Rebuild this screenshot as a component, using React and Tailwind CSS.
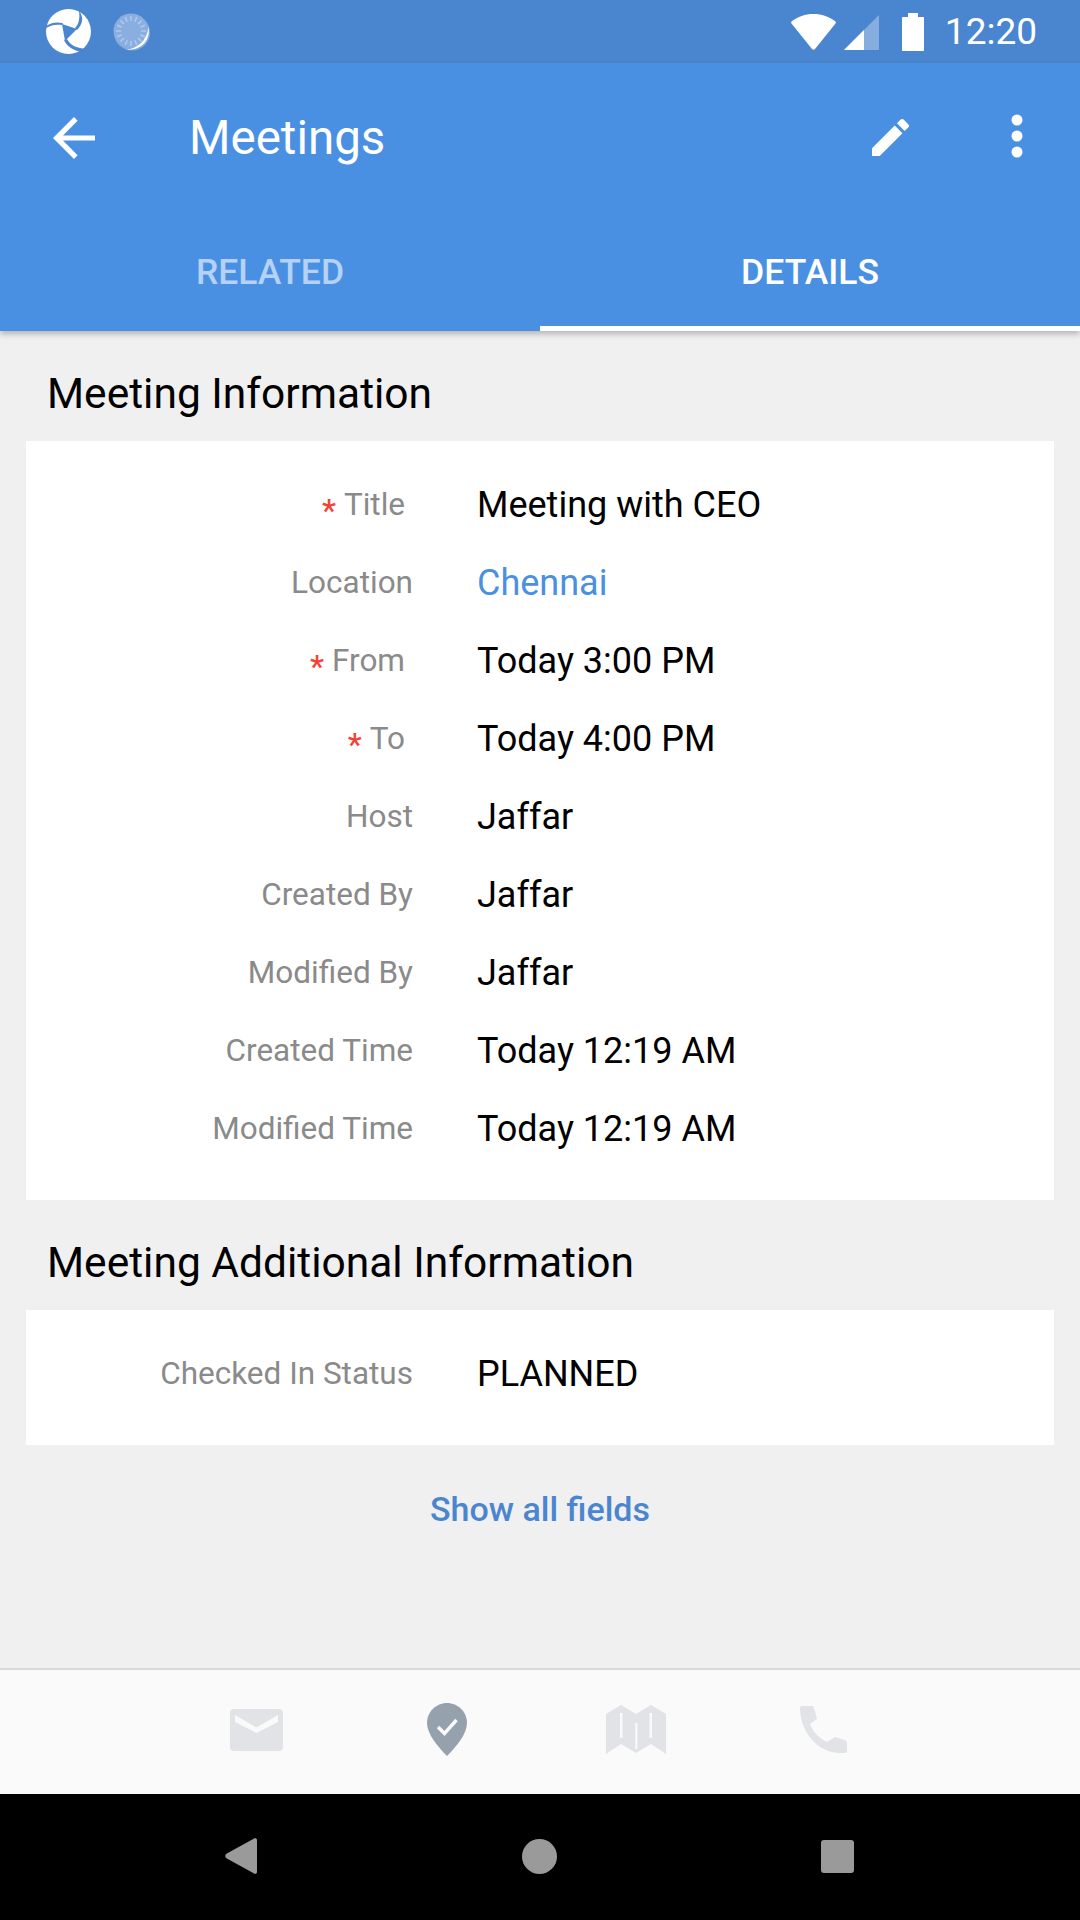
import React from 'react';

// top status bar logo
function AppLogo() {
    return (
        <svg width="45" height="45" viewBox="0 0 45 45" className="block">
            <circle cx="22.5" cy="22.5" r="22.5" fill="#fff" />
            <path d="M16 15 L31 20 L19 32 Z" fill="#4a86cf" />
            <path d="M0 17 C6 13 11 13 17 14 L16 16 C10 15 5 16 0 19 Z" fill="#4a86cf" />
            <path d="M33 2 C38 8 37 15 31 21 L29 19 C33 15 34 9 33 2 Z" fill="#4a86cf" />
            <path d="M18 31 L21 30 C24 36 30 39 40 40 L37 43 C28 42 21 38 18 31 Z" fill="#4a86cf" />
        </svg>
    );
}

function Spinner() {
    const ticks = [];
    for (let i = 0; i < 16; i++) {
        ticks.push(<rect key={i} x="17.3" y="3" width="1.4" height="5" fill="#b4cbeb" transform={`rotate(${i * 22.5} 18 18)`} />);
    }
    return (
        <svg width="38" height="38" viewBox="0 0 38 38" className="block">
            <circle cx="19" cy="19.5" r="18" fill="#a9c3e8" fillOpacity="0.6" />
            <circle cx="18" cy="18" r="17.5" fill="#8aaee0" />
            {ticks}
            <path d="M35.5 14 C38 28 27 38 13 36.5 C24 36 34 28 35.5 14 Z" fill="#fff" />
        </svg>
    );
}

function StatusIcons() {
    return (
        <div className="flex items-center">
            <svg width="45" height="36" viewBox="0 0 45 36" className="block">
                <path d="M22.5 0 C31 0 38 2.5 44.5 7.5 C45 8 45 9 44.5 9.5 L24 35 C23 36 22 36 21 35 L0.5 9.5 C0 9 0 8 0.5 7.5 C7 2.5 14 0 22.5 0 Z" fill="#fff" />
            </svg>
            <svg width="35" height="36" viewBox="0 0 35 36" className="block ml-[8px]">
                <path d="M35 1 L35 36 L0 36 Z" fill="#fff" fillOpacity="0.33" />
                <path d="M20 16 L20 36 L0 36 Z" fill="#fff" />
            </svg>
            <svg width="22" height="38" viewBox="0 0 22 38" className="block ml-[23px]">
                <path d="M6 0 H16 V4 H21 C21.6 4 22 4.4 22 5 V37 C22 37.6 21.6 38 21 38 H1 C0.4 38 0 37.6 0 37 V5 C0 4.4 0.4 4 1 4 H6 Z" fill="#fff" />
            </svg>
        </div>
    );
}

function Row({ label, value, required, link }) {
    return (
        <div className="flex h-[78px] items-center">
            <div className={`w-[387px] shrink-0 text-right text-[31.5px] text-[#8a8a8a] ${required ? 'pr-[8px]' : ''}`}>
                {required && <span className="mr-[8px] inline-block translate-y-[6px] font-medium text-[#f44336]">*</span>}
                {label}
            </div>
            <div className={`ml-[64px] text-[36px] ${link ? 'text-[#4a90e2]' : 'text-black'}`}>{value}</div>
        </div>
    );
}

const mainRows = [
    { label: 'Title', value: 'Meeting with CEO', required: true },
    { label: 'Location', value: 'Chennai', link: true },
    { label: 'From', value: 'Today 3:00 PM', required: true },
    { label: 'To', value: 'Today 4:00 PM', required: true },
    { label: 'Host', value: 'Jaffar' },
    { label: 'Created By', value: 'Jaffar' },
    { label: 'Modified By', value: 'Jaffar' },
    { label: 'Created Time', value: 'Today 12:19 AM' },
    { label: 'Modified Time', value: 'Today 12:19 AM' },
];

export default function App() {
    return (
        <div className="flex h-[1920px] w-[1080px] flex-col overflow-hidden bg-[#f0f0f0] font-['Roboto',sans-serif]">
            {/* Status bar */}
            <div className="flex h-[63px] shrink-0 items-center bg-[#4a86cf] pl-[46px] pr-[43px]">
                <AppLogo />
                <div className="ml-[22px]"><Spinner /></div>
                <div className="ml-auto"><StatusIcons /></div>
                <div className="ml-[21px] text-[37px] leading-none text-white">12:20</div>
            </div>

            {/* App bar */}
            <div className="z-10 shrink-0 bg-[#4a90e2] shadow-[0_3px_6px_rgba(0,0,0,0.25)]">
                <div className="flex h-[150px] items-center pl-[53px]">
                    <svg width="42" height="42" viewBox="0 0 42 42" className="block">
                        <path d="M42 18.4 H10 L24.6 3.7 L21 0 L0 21 L21 42 L24.6 38.3 L10 23.6 H42 Z" fill="#fff" />
                    </svg>
                    <div className="ml-[94px] pt-[2px] text-[47.5px] text-white">Meetings</div>
                    <svg width="37" height="37" viewBox="3 3 18 18" className="mb-[2px] ml-auto block">
                        <path d="M3 17.25V21h3.75L17.81 9.94l-3.75-3.75L3 17.25zM20.71 7.04c.39-.39.39-1.02 0-1.41l-2.34-2.34c-.39-.39-1.02-.39-1.41 0l-1.83 1.83 3.75 3.75 1.83-1.83z" fill="#fff" />
                    </svg>
                    <svg width="12" height="44" viewBox="0 0 12 44" className="mb-[4px] ml-[102px] mr-[57px] block">
                        <circle cx="6" cy="6" r="5.5" fill="#fff" />
                        <circle cx="6" cy="22" r="5.5" fill="#fff" />
                        <circle cx="6" cy="38" r="5.5" fill="#fff" />
                    </svg>
                </div>
                <div className="flex h-[118px]">
                    <div className="flex w-1/2 items-center justify-center border-b-[5px] border-transparent pt-[6px] text-[35.5px] font-medium text-[#b5d1f3]">RELATED</div>
                    <div className="flex w-1/2 items-center justify-center border-b-[5px] border-white pt-[6px] text-[35.5px] font-medium text-white">DETAILS</div>
                </div>
            </div>

            {/* Content */}
            <div className="flex-1 px-[26px]">
                <div className="flex h-[110px] items-center pl-[21px] pt-[16px] text-[42.5px] text-black">Meeting Information</div>
                <div className="h-[759px] bg-white pt-[25px]">
                    {mainRows.map((row) => (
                        <Row key={row.label} {...row} />
                    ))}
                </div>
                <div className="flex h-[110px] items-center pl-[21px] pt-[16px] text-[42.5px] text-black">Meeting Additional Information</div>
                <div className="h-[135px] bg-white pt-[25px]">
                    <Row label="Checked In Status" value="PLANNED" />
                </div>
                <div className="flex h-[128px] items-center justify-center text-[34px] font-medium text-[#4a86cf]">Show all fields</div>
            </div>

            {/* Bottom actions */}
            <div className="flex h-[126px] shrink-0 items-center border-t-2 border-[#d9d9d9] bg-[#fafafa] pb-[5px] pl-[230px]">
                <svg width="53" height="42" viewBox="0 0 53 42" className="block">
                    <rect width="53" height="42" rx="4" fill="#e1e3e7" />
                    <path d="M5 6 L26.5 18.6 L48 6 V13 L26.5 24 L5 13 Z" fill="#fafafa" />
                </svg>
                <svg width="40" height="53" viewBox="0 0 40 53" className="ml-[144px] block">
                    <path d="M20 0 C31 0 40 9 40 20 C40 31 29 44 20 53 C11 44 0 31 0 20 C0 9 9 0 20 0 Z" fill="#96a1ae" />
                    <path d="M11 24 L17.5 30.5 L29.5 17" fill="none" stroke="#fafafa" strokeWidth="3.4" />
                </svg>
                <svg width="60" height="50" viewBox="0 0 60 50" className="ml-[139px] block">
                    <path d="M0 9 L15 0 L30 9 L45 0 L60 9 V49 L45 39 L30 48 L15 39 L0 49 Z" fill="#e1e3e7" />
                    <rect x="14" y="8" width="2.5" height="25" fill="#fafafa" />
                    <rect x="29.3" y="18" width="2" height="26" fill="#fafafa" />
                    <rect x="43.5" y="8" width="2.5" height="25" fill="#fafafa" />
                </svg>
                <svg width="47" height="47" viewBox="0 0 47 47" className="ml-[134px] block">
                    <path d="M2 0 H12 Q14 0 14 2 L17 13 L10 18 C13 26 20 33 27 36 L35 31 L45 34 Q47 35 47 37 V45 Q47 47 45 47 H40 C18 47 0 26 0 2 Q0 0 2 0 Z" fill="#e1e3e7" />
                </svg>
            </div>

            {/* Navigation bar */}
            <div className="flex h-[126px] shrink-0 items-center bg-black pb-[2px] pl-[225px]">
                <svg width="32" height="36" viewBox="0 0 32 36" className="block">
                    <path d="M30 0 C31 0 32 1 32 2 V34 C32 35 31 36 30 36 L1 20 C0 19 0 17 1 16 Z" fill="#9a9a9a" />
                </svg>
                <div className="ml-[265px] h-[35px] w-[35px] rounded-full bg-[#9a9a9a]" />
                <div className="ml-[264px] h-[33px] w-[33px] rounded-[3px] bg-[#9a9a9a]" />
            </div>
        </div>
    );
}
